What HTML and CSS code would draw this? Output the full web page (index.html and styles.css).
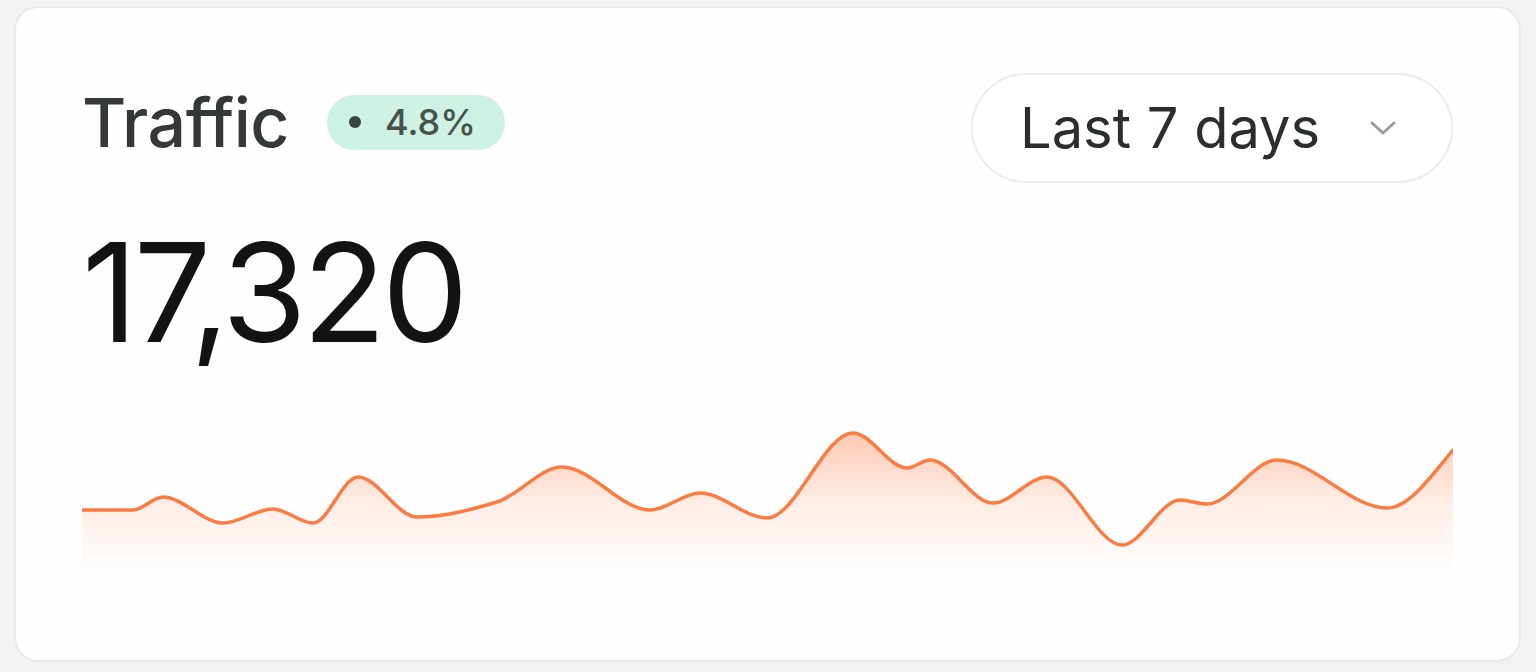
FILE: index.html
```html
<!DOCTYPE html>
<html lang="en">
<head>
<meta charset="utf-8">
<title>Traffic</title>
<link rel="stylesheet" href="styles.css">
</head>
<body>
<div class="card">
  <div class="header">
    <div class="title-group">
      <h1 class="title">Traffic</h1>
      <span class="badge"><span class="badge-dot"></span><span class="badge-text">4.8%</span></span>
    </div>
    <button class="select" type="button">
      <span class="select-label">Last 7 days</span>
      <svg class="chevron" width="28" height="16" viewBox="0 0 28 16" aria-hidden="true">
        <path d="M3 3 L14 13 L25 3" fill="none" stroke="#9b9b9b" stroke-width="3" stroke-linecap="round" stroke-linejoin="round"/>
      </svg>
    </button>
  </div>
  <div class="value">17,320</div>
  <svg class="chart" width="1371" height="160" viewBox="0 0 1371 160" aria-hidden="true">
    <defs>
      <linearGradient id="fade" gradientUnits="userSpaceOnUse" x1="0" y1="0" x2="0" y2="148">
        <stop offset="0" stop-color="#ff7a3d" stop-opacity="0.42"/>
        <stop offset="0.55" stop-color="#ff7a3d" stop-opacity="0.12"/>
        <stop offset="1" stop-color="#ff7a3d" stop-opacity="0"/>
      </linearGradient>
    </defs>
    <path fill="url(#fade)" d="M0,85 L51,85 C61,85 71,72 81,72 C101,72 121,98 141,98 C157.7,98 174.3,84 191,84 C204.3,84 217.7,98 231,98 C246,98 261,52 276,52 C295.7,52 315.3,92 335,92 C361.7,92 388.3,85 415,77 C436.7,70.5 458.3,42 480,42 C509.3,42 538.7,85 568,85 C584.7,85 601.3,68 618,68 C640.3,68 662.7,93 685,93 C713.7,93 742.3,8 771,8 C789,8 807,43 825,43 C832.7,43 840.3,35 848,35 C869,35 890,78 911,78 C929,78 947,52 965,52 C990,52 1015,120 1040,120 C1059.3,120 1078.7,75 1098,75 C1107,75 1116,79 1125,79 C1148.3,79 1171.7,35 1195,35 C1231.7,35 1268.3,83 1305,83 C1327,83 1349,51.4 1371,25 L1371,160 L0,160 Z"/>
    <path fill="none" stroke="#fb7c42" stroke-width="3.5" stroke-linecap="round" stroke-linejoin="round" d="M0,85 L51,85 C61,85 71,72 81,72 C101,72 121,98 141,98 C157.7,98 174.3,84 191,84 C204.3,84 217.7,98 231,98 C246,98 261,52 276,52 C295.7,52 315.3,92 335,92 C361.7,92 388.3,85 415,77 C436.7,70.5 458.3,42 480,42 C509.3,42 538.7,85 568,85 C584.7,85 601.3,68 618,68 C640.3,68 662.7,93 685,93 C713.7,93 742.3,8 771,8 C789,8 807,43 825,43 C832.7,43 840.3,35 848,35 C869,35 890,78 911,78 C929,78 947,52 965,52 C990,52 1015,120 1040,120 C1059.3,120 1078.7,75 1098,75 C1107,75 1116,79 1125,79 C1148.3,79 1171.7,35 1195,35 C1231.7,35 1268.3,83 1305,83 C1327,83 1349,51.4 1371,25"/>
  </svg>
</div>
</body>
</html>
```

FILE: styles.css
```css
* {
  box-sizing: border-box;
}

html, body {
  margin: 0;
  height: 100%;
}

body {
  background: #f2f2f2;
  padding: 6px 15px 0 14px;
  font-family: Inter, "Noto Sans", "Liberation Sans", sans-serif;
  overflow: hidden;
}

.card {
  height: 656px;
  background: #fefefe;
  border: 2px solid #e8e8e8;
  border-radius: 24px;
  padding: 65px 66px 0 66px;
  display: flex;
  flex-direction: column;
}

.header {
  display: flex;
  justify-content: space-between;
  align-items: center;
}

.title-group {
  display: flex;
  align-items: center;
  gap: 38px;
  margin-bottom: 12px;
}

.title {
  margin: 0;
  font-size: 68px;
  line-height: 1;
  font-weight: 500;
  color: #343936;
  letter-spacing: -0.5px;
}

.badge {
  display: inline-flex;
  align-items: center;
  height: 55px;
  padding: 0 29px 0 22px;
  border-radius: 28px;
  background: #cdf2e3;
  gap: 24px;
}

.badge-dot {
  width: 12px;
  height: 12px;
  border-radius: 50%;
  background: #3a4540;
}

.badge-text {
  font-size: 36px;
  font-weight: 500;
  line-height: 1;
  color: #45514b;
  letter-spacing: 0;
}

.select {
  display: inline-flex;
  align-items: center;
  height: 110px;
  width: 482px;
  padding: 0 54px 0 47px;
  border: 2px solid #ebebeb;
  border-radius: 55px;
  background: #ffffff;
  justify-content: space-between;
  font-family: inherit;
  cursor: pointer;
}

.select-label {
  font-size: 56px;
  line-height: 1;
  font-weight: 400;
  color: #2a2e2c;
}

.chevron {
  display: block;
}

.value {
  margin-top: 41px;
  font-size: 137px;
  line-height: 1;
  font-weight: 400;
  color: #131313;
  letter-spacing: -4px;
}

.chart {
  display: block;
  margin-top: 64px;
}
```
